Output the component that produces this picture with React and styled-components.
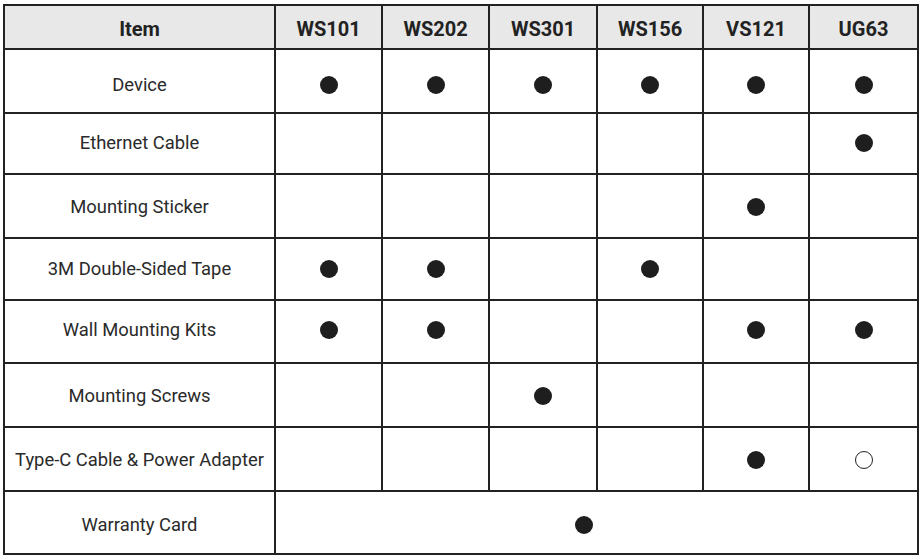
import React from "react";
import styled, { createGlobalStyle } from "styled-components";

const GlobalStyle = createGlobalStyle`
  html, body {
    margin: 0;
    padding: 0;
    background: #ffffff;
  }
  body {
    font-family: Roboto, "Liberation Sans", Arial, sans-serif;
    color: #222222;
  }
`;

const Page = styled.div`
  padding: 4px 0 0 3px;
`;

const Table = styled.table`
  border-collapse: collapse;
  table-layout: fixed;
  width: 914px;
`;

// shift content down (positive) or up (negative) within a cell
const nudge = (dy = 0) =>
  dy >= 0 ? `${dy * 2}px 0 0` : `0 0 ${-dy * 2}px`;

const HeadCell = styled.th`
  height: 44px;
  padding: 4px 0 0;
  box-sizing: border-box;
  background: #e8e8e8;
  border: 2px solid #222222;
  font-size: 20px;
  font-weight: 700;
  color: #222222;
  text-align: center;
  vertical-align: middle;
`;

const ItemCell = styled.td`
  height: ${(p) => p.$h}px;
  padding: ${(p) => nudge(p.$dy)};
  box-sizing: border-box;
  border: 2px solid #222222;
  font-size: 18.4px;
  color: #2a2a2a;
  text-align: center;
  vertical-align: middle;
  white-space: nowrap;
`;

const MarkCell = styled.td`
  padding: ${(p) => nudge(p.$dy)};
  padding-right: ${(p) => p.$shift || 0}px;
  border: 2px solid #222222;
  text-align: center;
  vertical-align: middle;
`;

const Dot = styled.span`
  display: inline-block;
  width: 18px;
  height: 18px;
  border-radius: 50%;
  box-sizing: border-box;
  vertical-align: middle;
  background: ${(p) => (p.$hollow ? "#ffffff" : "#1e1e1e")};
  border: ${(p) => (p.$hollow ? "1.5px solid #222222" : "none")};
`;

const models = ["WS101", "WS202", "WS301", "WS156", "VS121", "UG63"];
const widths = [271, 107, 107, 108, 106, 106, 109];

// 1 = included, 2 = optional (hollow)
const rows = [
  { name: "Device", h: 64, dy: 3.5, marks: [1, 1, 1, 1, 1, 1] },
  { name: "Ethernet Cable", h: 61, dy: -1.5, marks: [0, 0, 0, 0, 0, 1] },
  { name: "Mounting Sticker", h: 64, dy: 0, marks: [0, 0, 0, 0, 1, 0] },
  { name: "3M Double-Sided Tape", h: 62, dy: -0.5, marks: [1, 1, 0, 1, 0, 0] },
  { name: "Wall Mounting Kits", h: 63, dy: -2, marks: [1, 1, 0, 0, 1, 1] },
  { name: "Mounting Screws", h: 64, dy: 0, marks: [0, 0, 1, 0, 0, 0] },
  { name: "Type-C Cable & Power Adapter", h: 64, dy: 0, marks: [0, 0, 0, 0, 1, 2] },
];

export default function App() {
  return (
    <Page>
      <GlobalStyle />
      <Table>
        <colgroup>
          {widths.map((w, i) => (
            <col key={i} style={{ width: w }} />
          ))}
        </colgroup>
        <thead>
          <tr>
            <HeadCell>Item</HeadCell>
            {models.map((m) => (
              <HeadCell key={m}>{m}</HeadCell>
            ))}
          </tr>
        </thead>
        <tbody>
          {rows.map((r) => (
            <tr key={r.name}>
              <ItemCell $h={r.h} $dy={r.dy}>
                {r.name}
              </ItemCell>
              {r.marks.map((v, i) => (
                <MarkCell key={i} $dy={r.dy}>
                  {v === 1 && <Dot />}
                  {v === 2 && <Dot $hollow />}
                </MarkCell>
              ))}
            </tr>
          ))}
          <tr>
            <ItemCell $h={63} $dy={1.5}>
              Warranty Card
            </ItemCell>
            <MarkCell colSpan={6} $dy={1.5} $shift={26}>
              <Dot />
            </MarkCell>
          </tr>
        </tbody>
      </Table>
    </Page>
  );
}
